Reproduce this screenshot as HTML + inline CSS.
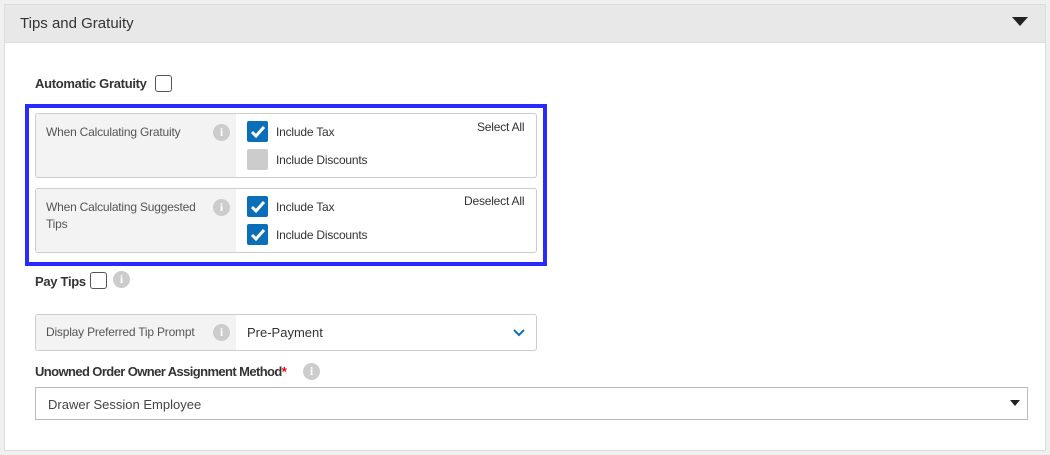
<!DOCTYPE html><html><head><style>
*{box-sizing:border-box;margin:0;padding:0}
body{width:1050px;height:455px;background:#f0f0f0;font-family:"Liberation Sans",sans-serif;position:relative;overflow:hidden;color:#333}
.a{position:absolute}
.panel{left:4px;top:4px;width:1042px;height:447px;background:#fff;border:1px solid #ddd}
.hdr{left:5px;top:5px;width:1040px;height:38px;background:#e8e8e8;border-bottom:1px solid #ddd;font-size:15px;color:#333;padding:10px 15px}
.b{font-weight:bold;font-size:13px;color:#333;letter-spacing:-0.3px}
.cb{width:17px;height:17px;border:1.5px solid #555;border-radius:3px;background:#fff}
.info{width:17px;height:17px;border-radius:50%;background:#ccc;color:#fff;font-size:12px;font-weight:bold;text-align:center;line-height:17px;font-family:"Liberation Serif",serif}
.row{border:1px solid #ccc;border-radius:3px;background:#fff;overflow:hidden}
.lab{position:absolute;left:0;top:0;bottom:0;width:200px;background:#f3f3f3;font-size:12px;color:#555;padding:10px 40px 10px 10px;line-height:17px;letter-spacing:-0.2px}
.chk{width:21px;height:21px;border-radius:2px;background:#0a6fb8}
.chk svg{display:block}
.grey{background:#ccc}
.t{font-size:12px;color:#333;letter-spacing:-0.2px}
</style></head><body>
<div class="a panel"></div>
<div class="a hdr">Tips and Gratuity</div>
<svg class="a" style="left:1012px;top:17px" width="16" height="10"><path d="M0 0H16L8 9Z" fill="#222"/></svg>
<div class="a b" style="left:35px;top:76px">Automatic Gratuity</div>
<div class="a cb" style="left:155px;top:75px"></div>
<div class="a" style="left:25px;top:104px;width:522px;height:162px;border:4px solid #2a2aff"></div>

<div class="a row" style="left:35px;top:113px;width:502px;height:65px">
<div class="lab">When Calculating Gratuity</div>
<div class="a info" style="left:177px;top:10px">i</div>
<div class="a chk" style="left:211px;top:7px"><svg width="21" height="21"><path d="M5 11l4 4 8-9" stroke="#fff" stroke-width="3" fill="none"/></svg></div>
<div class="a t" style="left:240px;top:11px">Include Tax</div>
<div class="a chk grey" style="left:211px;top:35px"></div>
<div class="a t" style="left:240px;top:39px">Include Discounts</div>
<div class="a t" style="left:441px;top:6px">Select All</div>
</div>
<div class="a row" style="left:35px;top:188px;width:502px;height:65px">
<div class="lab">When Calculating Suggested Tips</div>
<div class="a info" style="left:177px;top:10px">i</div>
<div class="a chk" style="left:211px;top:7px"><svg width="21" height="21"><path d="M5 11l4 4 8-9" stroke="#fff" stroke-width="3" fill="none"/></svg></div>
<div class="a t" style="left:240px;top:11px">Include Tax</div>
<div class="a chk" style="left:211px;top:35px"><svg width="21" height="21"><path d="M5 11l4 4 8-9" stroke="#fff" stroke-width="3" fill="none"/></svg></div>
<div class="a t" style="left:240px;top:39px">Include Discounts</div>
<div class="a t" style="left:428px;top:5px">Deselect All</div>
</div>

<div class="a b" style="left:35px;top:274px">Pay Tips</div>
<div class="a cb" style="left:90px;top:272px"></div>
<div class="a info" style="left:113px;top:271px">i</div>

<div class="a row" style="left:35px;top:314px;width:502px;height:37px">
<div class="lab" style="padding-top:9px;padding-right:10px">Display Preferred Tip Prompt</div>
<div class="a info" style="left:177px;top:9px">i</div>
<div class="a" style="left:211px;top:10px;font-size:13px;color:#333">Pre-Payment</div>
<svg class="a" style="left:477px;top:14px" width="12" height="8"><path d="M1 1l5 5 5-5" stroke="#0a6fb8" stroke-width="2" fill="none"/></svg>
</div>

<div class="a b" style="left:35px;top:364px;letter-spacing:-0.6px">Unowned Order Owner Assignment Method<span style="color:#e00">*</span></div>
<div class="a info" style="left:303px;top:363px">i</div>
<div class="a" style="left:35px;top:387px;width:993px;height:33px;border:1px solid #bbb;background:#fff;font-size:13px;color:#444;padding:9px 12px">Drawer Session Employee</div>
<svg class="a" style="left:1010px;top:400px" width="10" height="6"><path d="M0 0H10L5 6Z" fill="#222"/></svg>
</body></html>
